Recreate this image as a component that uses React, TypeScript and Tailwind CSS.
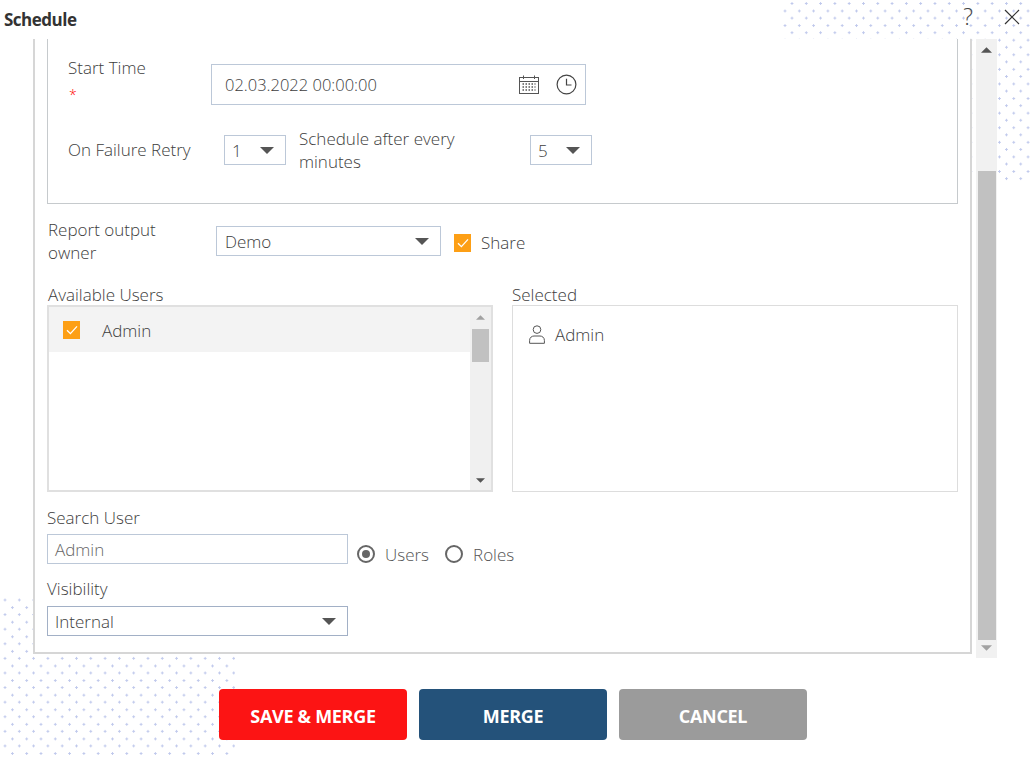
import React from "react";

const Caret = ({ className = "" }: { className?: string }) => (
  <svg width="14" height="7" viewBox="0 0 14 7" className={className}>
    <polygon points="0,0 14,0 7,7" fill="#555" />
  </svg>
);

const Check = () => (
  <span className="flex h-[18px] w-[17px] shrink-0 items-center justify-center bg-[#fd9f15]">
    <svg width="12" height="10" viewBox="0 0 12 10" fill="none">
      <path d="M1 5.2 L4.4 8.6 L11 1.4" stroke="#fff" strokeWidth="1.3" />
    </svg>
  </span>
);

const Select = ({ value, className }: { value: string; className: string }) => (
  <div className={`flex h-[30px] shrink-0 items-center justify-between border border-[#bcc8d8] bg-white ${className}`}>
    <span className="pt-[2px]">{value}</span>
    <Caret />
  </div>
);

const Calendar = () => (
  <svg width="20" height="20" viewBox="0 0 20 20" fill="none" stroke="#555">
    <rect x="0.5" y="2.5" width="19" height="16" />
    <path d="M0.5 6.5H19.5M4.5 0.5V4M15.5 0.5V4" />
    <path d="M3.5 9H16.5M3.5 12H16.5M3.5 15H16.5" strokeDasharray="1.5 1.5" strokeWidth="1.3" />
  </svg>
);

const Clock = () => (
  <svg width="21" height="21" viewBox="0 0 21 21" fill="none" stroke="#444" strokeWidth="1.2">
    <circle cx="10.5" cy="10.5" r="9.4" />
    <path d="M10.5 4.8V11H15.5" />
  </svg>
);

const User = () => (
  <svg width="16" height="19" viewBox="0 0 16 19" fill="none" stroke="#555" strokeWidth="1">
    <circle cx="8" cy="4.6" r="3.8" />
    <path d="M0.6 18.3V15.4C0.6 12.4 3 11 5 11H11C13 11 15.4 12.4 15.4 15.4V18.3Z" />
  </svg>
);

const Btn = ({ label, className }: { label: string; className: string }) => (
  <button className={`h-[51px] w-[188px] rounded-[4px] pt-[3px] text-[18px] font-bold tracking-[-0.3px] text-white ${className}`}>
    {label}
  </button>
);

export default function App() {
  return (
    <div className="relative h-[757px] w-[1031px] overflow-hidden bg-white font-['Open_Sans','Noto_Sans',sans-serif] text-[17px] font-light text-[#3d3d3d]">
      <div className="absolute right-0 top-0 h-[183px] w-[250px] [background-image:radial-gradient(circle,#c0c9ec_1px,transparent_1.3px),radial-gradient(circle,#c0c9ec_1px,transparent_1.3px)] [background-position:3.85px_-3.8px,-3.15px_3.7px] [background-size:14.3px_14.6px]" />
      <div className="absolute bottom-0 left-0 h-[162px] w-[235px] [background-image:radial-gradient(circle,#c0c9ec_1px,transparent_1.3px),radial-gradient(circle,#c0c9ec_1px,transparent_1.3px)] [background-position:-2.15px_-2.3px,5.25px_5.3px] [background-size:14.3px_14.6px]" />

      <div className="relative flex h-full flex-col">
        <header className="flex h-[39px] shrink-0 items-center justify-between pl-[4px] pr-[11px]">
          <h1 className="text-[17px] font-bold tracking-[-0.5px] text-[#333]">Schedule</h1>
          <div className="mb-[6px] flex items-center gap-[31px]">
            <span className="text-[23px] leading-none text-[#444]">?</span>
            <svg width="16" height="16" viewBox="0 0 16 16" stroke="#333" strokeWidth="1.2">
              <path d="M1 1L15 15M15 1L1 15" />
            </svg>
          </div>
        </header>

        <div className="flex h-[619px] shrink-0 items-start">
          <main className="ml-[33px] h-[615px] w-[939px] shrink-0 border-b-2 border-l-2 border-r-2 border-[#d6d6d6] bg-white pl-[12px] pr-[12px]">
            <section className="h-[165px] w-[911px] border-b border-l border-r border-[#c6cacd] pl-[20px] pt-[16px]">
              <div className="flex">
                <div className="w-[143px]">
                  <div className="h-[26px] leading-[26px]">Start Time</div>
                  <div className="pl-[1px] pt-[4px] text-[14px] leading-[20px] text-[#f00]">*</div>
                </div>
                <div className="mt-[9px] flex h-[41px] w-[375px] items-center justify-between border border-[#bcc8d8] pl-[13px] pr-[8px]">
                  <span className="pt-[2px] text-[16.5px]">02.03.2022 00:00:00</span>
                  <span className="flex items-center gap-[17px]">
                    <Calendar />
                    <Clock />
                  </span>
                </div>
              </div>
              <div className="mt-[22px] flex items-center">
                <div className="w-[156px]">On Failure Retry</div>
                <Select value="1" className="w-[62px] pl-[7px] pr-[11px]" />
                <div className="ml-[13px] w-[231px] pr-[40px] leading-[23px]">Schedule after every minutes</div>
                <Select value="5" className="w-[62px] pl-[7px] pr-[11px]" />
              </div>
            </section>

            <div className="mt-[15px] flex h-[46px] items-start pl-[1px]">
              <div className="-mt-[1px] w-[168px] pr-[30px] leading-[23px]">Report output owner</div>
              <Select value="Demo" className="mt-[7px] w-[225px] pl-[8px] pr-[11px]" />
              <div className="ml-[13px] mt-[11px] flex items-center gap-[10px]">
                <Check />
                <span>Share</span>
              </div>
            </div>

            <div className="mt-[16px] flex">
              <div className="w-[465px] shrink-0">
                <div className="h-[24px] pl-[1px] leading-[28px]">Available Users</div>
                <div className="flex h-[187px] w-[446px] border-2 border-[#e0e0e0]">
                  <div className="flex-1">
                    <div className="flex h-[45px] items-center bg-[#f3f3f3] pl-[14px]">
                      <Check />
                      <span className="ml-[22px] pt-[2px]">Admin</span>
                    </div>
                  </div>
                  <div className="flex w-[21px] flex-col items-center justify-between bg-[#f0f0f0] pb-[7px] pt-[8px]">
                    <div className="flex w-full flex-col items-center">
                      <Caret className="h-[5px] w-[9px] rotate-180 opacity-50" />
                      <div className="mt-[9px] h-[33px] w-[17px] bg-[#c1c1c1]" />
                    </div>
                    <Caret className="h-[5px] w-[9px]" />
                  </div>
                </div>
              </div>
              <div className="w-[446px] shrink-0">
                <div className="h-[24px] leading-[28px]">Selected</div>
                <div className="h-[187px] border border-[#dddddd] pl-[16px] pt-[16px]">
                  <div className="flex items-center gap-[10px]">
                    <User />
                    <span>Admin</span>
                  </div>
                </div>
              </div>
            </div>

            <div className="mt-[13px] h-[26px] leading-[26px]">Search User</div>
            <div className="mt-[3px] flex items-end">
              <div className="flex h-[30px] w-[301px] items-center border border-[#bcc8d8] pl-[7px] pt-[2px] text-[#666]">Admin</div>
              <div className="mb-[-3px] ml-[9px] flex items-center text-[#555]">
                <span className="flex h-[18px] w-[18px] items-center justify-center rounded-full border-2 border-[#666]">
                  <span className="h-[8px] w-[8px] rounded-full bg-[#666]" />
                </span>
                <span className="ml-[10px]">Users</span>
                <span className="ml-[16px] h-[18px] w-[18px] rounded-full border-2 border-[#666]" />
                <span className="ml-[10px]">Roles</span>
              </div>
            </div>
            <div className="mt-[12px] h-[26px] leading-[26px]">Visibility</div>
            <Select value="Internal" className="mt-[4px] w-[301px] !border-[#a2b0c6] pl-[7px] pr-[11px]" />
          </main>

          <aside className="ml-[4px] flex h-[619px] w-[21px] shrink-0 flex-col items-center justify-between bg-[#f1f1f1] pb-[7px] pt-[8px]">
            <Caret className="h-[6px] w-[11px] rotate-180" />
            <div className="mt-[118px] w-[18px] flex-1 bg-[#c1c1c1]" />
            <Caret className="mt-[5px] h-[6px] w-[11px] opacity-50" />
          </aside>
        </div>

        <footer className="mt-[31px] flex gap-[12px] pl-[219px]">
          <Btn label="SAVE & MERGE" className="bg-[#fc1414]" />
          <Btn label="MERGE" className="bg-[#24527a]" />
          <Btn label="CANCEL" className="bg-[#9b9b9b]" />
        </footer>
      </div>
    </div>
  );
}
